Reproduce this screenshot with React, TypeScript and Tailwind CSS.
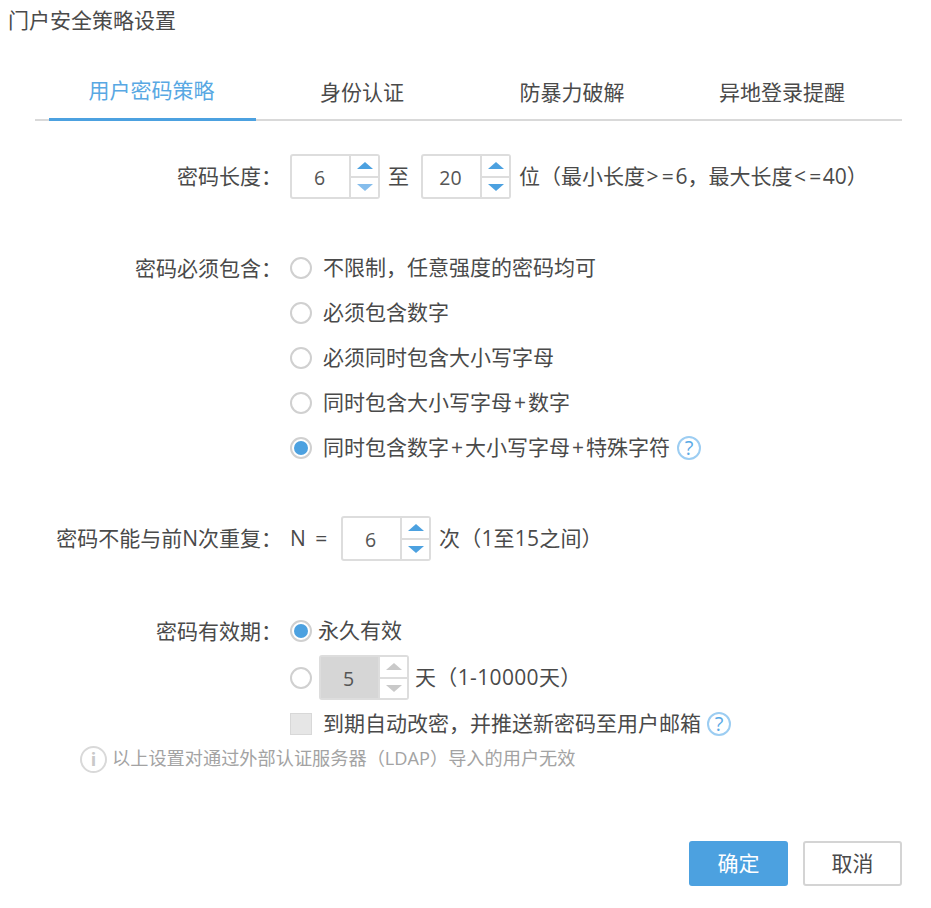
type SpinnerProps = {
  value: string
  disabled?: boolean
  upLight?: boolean
  downLight?: boolean
}

function Spinner({ value, disabled, upLight, downLight }: SpinnerProps) {
  const upColor = disabled ? "border-b-[#c9c9c9]" : upLight ? "border-b-[#85bdec]" : "border-b-[#4ca1e0]"
  const downColor = disabled ? "border-t-[#c9c9c9]" : downLight ? "border-t-[#85bdec]" : "border-t-[#4ca1e0]"
  return (
    <div className={`flex h-[45px] w-[90px] shrink-0 rounded-[3px] border-2 border-[#ddd] ${disabled ? "" : "bg-white"}`}>
      <div className={`flex w-[57px] items-center justify-center text-[19.5px] ${disabled ? "bg-[#d6d6d6]" : ""}`}>
        <span className="pr-[2px] pt-[2px] text-[#555]">{value}</span>
      </div>
      <div className="flex flex-1 flex-col border-l-2 border-[#ddd] bg-white">
        <div className="flex flex-1 items-center justify-center border-b-2 border-[#ddd]">
          <div className={`h-0 w-0 border-x-[8px] border-b-[7px] border-x-transparent ${upColor}`} />
        </div>
        <div className="flex flex-1 items-center justify-center">
          <div className={`h-0 w-0 border-x-[8px] border-t-[7px] border-x-transparent ${downColor}`} />
        </div>
      </div>
    </div>
  )
}

function Radio({ checked }: { checked?: boolean }) {
  return (
    <div className="flex h-[22px] w-[22px] shrink-0 items-center justify-center rounded-full border-2 border-[#d0d0d0] bg-white">
      {checked && <div className="h-[14px] w-[14px] rounded-full bg-[#4ca1e0]" />}
    </div>
  )
}

function HelpIcon() {
  return (
    <div className="flex h-[24px] w-[24px] shrink-0 items-center justify-center rounded-full border-2 border-[#9ccdf2] text-[20px] leading-none text-[#5aaae6]">
      ?
    </div>
  )
}

function Label({ text }: { text: string }) {
  return <div className="w-[282px] shrink-0 text-right">{text}</div>
}

// symbols sit wider in the original font
function Sym({ children }: { children: string }) {
  return <span className="mx-[1.6px]">{children}</span>
}

const Plus = () => <span className="mx-[2px]">+</span>

export default function App() {
  const tabs = ["用户密码策略", "身份认证", "防暴力破解", "异地登录提醒"]
  return (
    <div
      className="h-[908px] w-[931px] overflow-hidden bg-white text-[21px] text-[#4a4a4a]"
      style={{ fontFamily: '"Open Sans", "Noto Sans CJK SC", sans-serif' }}
    >
      <div className="h-[42px] pl-2 pt-[4px] leading-[32px]">门户安全策略设置</div>

      <div className="ml-[35px] mr-[29px] mt-[26px] flex h-[53px] border-b-2 border-[#d9d9d9] pl-[14px]">
        {tabs.map((tab, i) => (
          <div
            key={tab}
            className={`-mb-[2px] flex h-[53px] items-center justify-center pb-[4px] ${
              i === 0 ? "w-[207px] border-b-[3px] border-[#4ca1e0] pr-[2px] text-[#58a8e3]" : "w-[210px] pl-[2px]"
            }`}
          >
            {tab}
          </div>
        ))}
      </div>

      <div className="mt-[33px] flex h-[45px] items-center">
        <Label text={"密码长度\uFF1A"} />
        <div className="ml-[8px] flex items-center">
          <Spinner value="6" downLight />
          <span className="ml-[8px] mr-[12px]">至</span>
          <Spinner value="20" />
          <span className="ml-[8px] whitespace-nowrap">
            {"位\uFF08最小长度"}
            <Sym>{">"}</Sym>
            <Sym>=</Sym>
            {"6\uFF0C最大长度"}
            <Sym>{"<"}</Sym>
            <Sym>=</Sym>
            {"40\uFF09"}
          </span>
        </div>
      </div>

      <div className="mt-[54px] flex">
        <Label text={"密码必须包含\uFF1A"} />
        <div className="ml-[8px] flex flex-col gap-[15px]">
          <div className="flex h-[30px] items-center">
            <Radio />
            <span className="ml-[11px]">{"不限制\uFF0C任意强度的密码均可"}</span>
          </div>
          <div className="flex h-[30px] items-center">
            <Radio />
            <span className="ml-[11px]">必须包含数字</span>
          </div>
          <div className="flex h-[30px] items-center">
            <Radio />
            <span className="ml-[11px]">必须同时包含大小写字母</span>
          </div>
          <div className="flex h-[30px] items-center">
            <Radio />
            <span className="ml-[11px]">
              同时包含大小写字母
              <Plus />
              数字
            </span>
          </div>
          <div className="flex h-[30px] items-center">
            <Radio checked />
            <span className="ml-[11px]">
              同时包含数字
              <Plus />
              大小写字母
              <Plus />
              特殊字符
            </span>
            <div className="ml-[7px]">
              <HelpIcon />
            </div>
          </div>
        </div>
      </div>

      <div className="mt-[53px] flex h-[45px] items-center">
        <Label text={"密码不能与前N次重复\uFF1A"} />
        <div className="ml-[8px] flex items-center">
          <span className="w-[51px] [word-spacing:4px]">N =</span>
          <Spinner value="6" />
          <span className="ml-[8px] tracking-[0.2px]">{"次\uFF081至15之间\uFF09"}</span>
        </div>
      </div>

      <div className="mt-[55px] flex">
        <Label text={"密码有效期\uFF1A"} />
        <div className="ml-[8px] flex flex-col">
          <div className="flex h-[30px] items-center">
            <Radio checked />
            <span className="ml-[6px]">永久有效</span>
          </div>
          <div className="mt-[9px] flex h-[45px] items-center">
            <Radio />
            <div className="ml-[7px]">
              <Spinner value="5" disabled />
            </div>
            <span className="ml-[6px] tracking-[0.35px]">{"天\uFF081-10000天\uFF09"}</span>
          </div>
          <div className="mt-[9px] flex h-[30px] items-center">
            <div className="h-[22px] w-[22px] shrink-0 border border-[#d8d8d8] bg-[#e6e6e6]" />
            <span className="ml-[11px] whitespace-nowrap">{"到期自动改密\uFF0C并推送新密码至用户邮箱"}</span>
            <div className="ml-[6px]">
              <HelpIcon />
            </div>
          </div>
        </div>
      </div>

      <div className="ml-[80px] mt-[5px] flex h-[30px] items-center text-[18.2px] text-[#a3a3a3]">
        <div className="flex h-[27px] w-[27px] shrink-0 items-center justify-center rounded-full border-2 border-[#d9d9d9] text-[18px] font-bold leading-none text-[#c9c9c9]">
          i
        </div>
        <span className="ml-[5px]">{"以上设置对通过外部认证服务器\uFF08LDAP\uFF09导入的用户无效"}</span>
      </div>

      <div className="mr-[29px] mt-[67px] flex justify-end gap-[15px]">
        <button className="h-[45px] w-[99px] rounded-[3px] bg-[#4ca1e0] text-white">确定</button>
        <button className="h-[45px] w-[99px] rounded-[3px] border-2 border-[#d4d4d4] bg-white">取消</button>
      </div>
    </div>
  )
}
